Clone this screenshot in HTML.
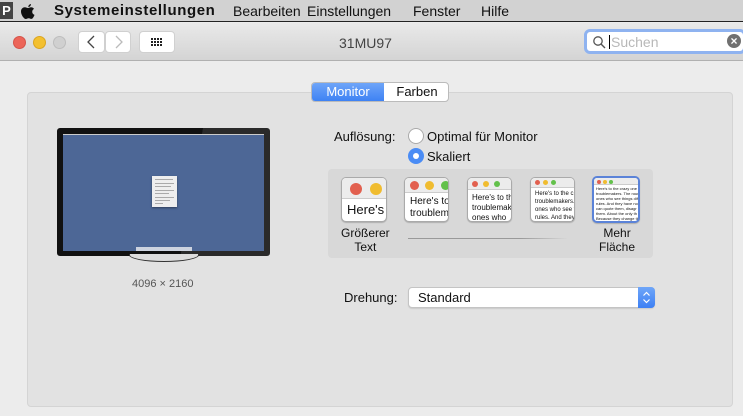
<!DOCTYPE html>
<html><head><meta charset="utf-8"><style>
*{margin:0;padding:0;box-sizing:border-box}
body{width:743px;height:416px;overflow:hidden;background:#ececec;font-family:"Liberation Sans",sans-serif;font-size:13px;color:#111;position:relative}
.a{position:absolute}
#menu{left:0;top:0;width:743px;height:22px;background:#d2d2d2;border-bottom:1px solid #222}
#menu span{position:absolute;top:3px;font-size:14px;color:#111}
#title{left:0;top:23px;width:743px;height:38px;background:linear-gradient(#e9e9e9,#d4d4d4);border-bottom:1px solid #b0b0b0}
.dot{width:13px;height:13px;border-radius:50%;top:13px}
.btn{background:#fff;border-radius:4px;border:1px solid #d0d0d0;height:22px;top:8px}
#panel{left:27px;top:92px;width:706px;height:315px;background:#e2e2e2;border:1px solid #d4d4d4;border-radius:4px}
.thumb{background:#fff;border:1px solid #aaa;border-radius:5px;overflow:hidden;box-shadow:0 1px 1px rgba(0,0,0,.2)}
.thumb .bar{background:#ececec;border-bottom:1px solid #ccc}
.c{border-radius:50%;position:absolute}
.ln{position:absolute;left:3px;height:1px;background:#aaa}
</style></head><body>
<div id="menu" class="a">
<div class="a" style="left:0;top:2px;width:13px;height:17px;background:#444;color:#fff;font-size:13px;font-weight:bold;text-align:center;line-height:17px">P</div>
<svg class="a" style="left:20px;top:3px" width="16" height="17" viewBox="0 0 16 17"><path d="M11 1c0 1.5-1.2 3-2.7 3C8.2 2.5 9.5 1.2 11 1zM8 5c1 0 2-.7 3-.7 1.2 0 2.3.6 3 1.6-2.6 1.4-2.2 5.1.5 6-0.5 1.4-1.7 4-3 4-1.1 0-1.4-.7-2.8-.7S7 16 5.8 16C4 16 1 12 1 8.5 1 5.8 3 4.3 4.8 4.3 6 4.3 7 5 8 5z" fill="#111"/></svg>
<span style="left:54px;font-weight:bold;font-size:15px;top:2px;letter-spacing:0.6px">Systemeinstellungen</span>
<span style="left:233px">Bearbeiten</span>
<span style="left:307px">Einstellungen</span>
<span style="left:413px">Fenster</span>
<span style="left:481px">Hilfe</span>
</div>
<div id="title" class="a">
<div class="a dot" style="left:13px;background:#ec6559;border:1px solid #d5544a"></div>
<div class="a dot" style="left:33px;background:#f3c030;border:1px solid #dba521"></div>
<div class="a dot" style="left:53px;background:#d0d0d0;border:1px solid #bdbdbd"></div>
<div class="a btn" style="left:78px;width:27px"><svg width="25" height="20"><path d="M15 4l-6 6 6 6" stroke="#444" stroke-width="1.3" fill="none"/></svg></div>
<div class="a btn" style="left:105px;width:26px"><svg width="24" height="20"><path d="M10 4l6 6-6 6" stroke="#bbb" stroke-width="1.3" fill="none"/></svg></div>
<div class="a btn" style="left:139px;width:36px"><svg width="34" height="20"><g fill="#222"><rect x="11" y="6" width="2" height="2"/><rect x="14" y="6" width="2" height="2"/><rect x="17" y="6" width="2" height="2"/><rect x="20" y="6" width="2" height="2"/><rect x="11" y="9" width="2" height="2"/><rect x="14" y="9" width="2" height="2"/><rect x="17" y="9" width="2" height="2"/><rect x="20" y="9" width="2" height="2"/><rect x="11" y="12" width="2" height="2"/><rect x="14" y="12" width="2" height="2"/><rect x="17" y="12" width="2" height="2"/><rect x="20" y="12" width="2" height="2"/></g></svg></div>
<div class="a" style="left:339px;top:12px;font-size:14px;color:#444">31MU97</div>
<div class="a" style="left:584px;top:6px;width:162px;height:25px;border:3px solid #8fb3f0;border-radius:6px;background:#fff">
<svg class="a" style="left:5px;top:3px" width="14" height="14"><circle cx="6" cy="6" r="4.2" stroke="#555" stroke-width="1.3" fill="none"/><path d="M9 9l4 4" stroke="#555" stroke-width="1.4"/></svg>
<div class="a" style="left:22px;top:3px;width:1px;height:14px;background:#000"></div>
<div class="a" style="left:24px;top:2px;color:#b8b8b8;font-size:14px">Suchen</div>
<div class="a" style="left:140px;top:2px;width:14px;height:14px;border-radius:50%;background:#707070;color:#fff;font-size:12px;line-height:14px;text-align:center;font-weight:bold">×</div>
</div>
</div>
<div id="panel" class="a"></div>
<div class="a" style="left:311px;top:82px;width:138px;height:20px;border:1px solid #bbb;border-radius:4px;background:#fff;overflow:hidden;font-size:13px">
<div class="a" style="left:0;top:0;width:72px;height:18px;background:linear-gradient(#6ea5f8,#3e82f4);color:#fff;text-align:center;line-height:18px">Monitor</div>
<div class="a" style="left:72px;top:0;width:66px;height:18px;text-align:center;line-height:18px">Farben</div>
</div>
<!-- monitor -->
<div class="a" style="left:57px;top:128px;width:213px;height:128px;background:linear-gradient(100deg,#111 62%,#2a2a2a 62%);border-radius:3px"></div>
<div class="a" style="left:63px;top:134px;width:201px;height:1px;background:#ccc"></div>
<div class="a" style="left:63px;top:135px;width:201px;height:116px;background:#4d6796"></div>
<div class="a" style="left:152px;top:176px;width:25px;height:31px;background:#eee;box-shadow:0 1px 2px rgba(0,0,0,.4)">
<div class="ln" style="top:3px;width:18px"></div><div class="ln" style="top:7px;width:19px"></div><div class="ln" style="top:10px;width:16px"></div><div class="ln" style="top:14px;width:19px"></div><div class="ln" style="top:17px;width:14px"></div><div class="ln" style="top:21px;width:19px"></div><div class="ln" style="top:24px;width:15px"></div><div class="ln" style="top:27px;width:8px"></div>
</div>
<div class="a" style="left:136px;top:247px;width:56px;height:4px;background:#cdd3df"></div>
<div class="a" style="left:129px;top:254px;width:70px;height:8px;border:1px solid #333;border-top:none;border-radius:0 0 40px 40px/0 0 8px 8px;background:#ddd"></div>
<div class="a" style="left:132px;top:278px;font-size:11px;color:#555">4096 × 2160</div>
<!-- resolution -->
<div class="a" style="left:334px;top:129px">Auflösung:</div>
<div class="a" style="left:408px;top:128px;width:16px;height:16px;border-radius:50%;background:#fff;border:1px solid #aaa"></div>
<div class="a" style="left:427px;top:129px">Optimal für Monitor</div>
<div class="a" style="left:408px;top:148px;width:16px;height:16px;border-radius:50%;background:#4a8cf5"><div class="a" style="left:5px;top:5px;width:6px;height:6px;border-radius:50%;background:#fff"></div></div>
<div class="a" style="left:427px;top:149px">Skaliert</div>
<div class="a" style="left:328px;top:169px;width:325px;height:89px;background:#d8d8d8;border-radius:4px"></div>
<div class="a thumb" style="left:341px;top:177px;width:46px;height:45px"><div class="bar" style="height:21px"></div><div class="c" style="left:8px;top:5px;width:12px;height:12px;background:#e2604f"></div><div class="c" style="left:28px;top:5px;width:12px;height:12px;background:#f0bc2f"></div><div class="a" style="left:5px;top:24px;font-size:13px">Here's</div></div>
<div class="a thumb" style="left:404px;top:177px;width:45px;height:45px"><div class="bar" style="height:15px"></div><div class="c" style="left:5px;top:3px;width:9px;height:9px;background:#e2604f"></div><div class="c" style="left:20px;top:3px;width:9px;height:9px;background:#f0bc2f"></div><div class="c" style="left:36px;top:3px;width:9px;height:9px;background:#63c14b"></div><div class="a" style="left:5px;top:18px;font-size:10px;line-height:12px;white-space:nowrap">Here's to<br>troublem</div></div>
<div class="a thumb" style="left:467px;top:177px;width:45px;height:45px"><div class="bar" style="height:12px"></div><div class="c" style="left:4px;top:3px;width:6px;height:6px;background:#e2604f"></div><div class="c" style="left:15px;top:3px;width:6px;height:6px;background:#f0bc2f"></div><div class="c" style="left:26px;top:3px;width:6px;height:6px;background:#63c14b"></div><div class="a" style="left:4px;top:15px;font-size:8px;line-height:10px;white-space:nowrap">Here's to th<br>troublemak<br>ones who</div></div>
<div class="a thumb" style="left:530px;top:177px;width:45px;height:45px"><div class="bar" style="height:10px"></div><div class="c" style="left:4px;top:2px;width:5px;height:5px;background:#e2604f"></div><div class="c" style="left:12px;top:2px;width:5px;height:5px;background:#f0bc2f"></div><div class="c" style="left:20px;top:2px;width:5px;height:5px;background:#63c14b"></div><div class="a" style="left:4px;top:12px;font-size:6px;line-height:8px;white-space:nowrap">Here's to the c<br>troublemakers.<br>ones who see t<br>rules. And they</div></div>
<div class="a thumb" style="left:592px;top:176px;width:48px;height:47px;border:2px solid #5b83d8"><div class="bar" style="height:7px"></div><div class="c" style="left:3px;top:2px;width:4px;height:4px;background:#e2604f"></div><div class="c" style="left:9px;top:2px;width:4px;height:4px;background:#f0bc2f"></div><div class="c" style="left:15px;top:2px;width:4px;height:4px;background:#63c14b"></div><div class="a" style="left:2px;top:8px;font-size:4px;line-height:5px;white-space:nowrap">Here's to the crazy one<br>troublemakers. The round<br>ones who see things diff<br>rules. And they have no<br>can quote them, disagr<br>them. About the only th<br>Because they change thi</div></div>
<div class="a" style="left:408px;top:238px;width:160px;height:1px;background:linear-gradient(90deg,#999,#999 70%,#d8d8d8)"></div>
<div class="a" style="left:341px;top:226px;font-size:12px;text-align:center;line-height:14px">Größerer<br>Text</div>
<div class="a" style="left:599px;top:226px;font-size:12px;text-align:center;line-height:14px">Mehr<br>Fläche</div>
<!-- rotation -->
<div class="a" style="left:344px;top:290px">Drehung:</div>
<div class="a" style="left:408px;top:287px;width:247px;height:21px;background:#fff;border:1px solid #c4c4c4;border-radius:4px;box-shadow:0 1px 1px rgba(0,0,0,.1)">
<div class="a" style="left:9px;top:2px;font-size:13px">Standard</div>
<div class="a" style="right:-1px;top:-1px;width:17px;height:21px;background:linear-gradient(#6fa6f8,#3d80f4);border-radius:0 4px 4px 0"><svg width="17" height="21"><path d="M5.5 8.5l3-3 3 3M5.5 12.5l3 3 3-3" stroke="#fff" stroke-width="1.2" fill="none"/></svg></div>
</div>
</body></html>
